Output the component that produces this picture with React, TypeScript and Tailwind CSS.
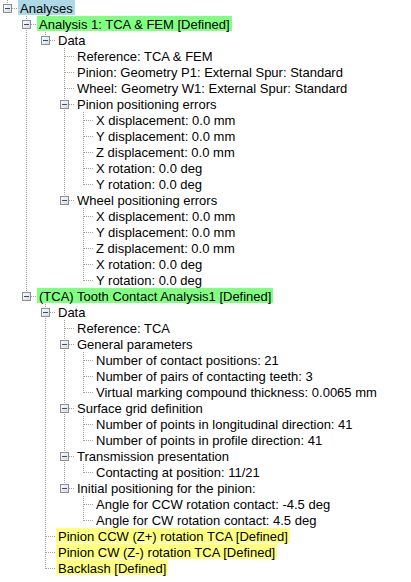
import React from "react";

type TreeNode = {
  label: string;
  hl?: "blue" | "green" | "yellow";
  children?: TreeNode[];
};

const positioning = (prefix: string): TreeNode => ({
  label: prefix,
  children: [
    { label: "X displacement: 0.0 mm" },
    { label: "Y displacement: 0.0 mm" },
    { label: "Z displacement: 0.0 mm" },
    { label: "X rotation: 0.0 deg" },
    { label: "Y rotation: 0.0 deg" },
  ],
});

const tree: TreeNode[] = [
  {
    label: "Analyses",
    hl: "blue",
    children: [
      {
        label: "Analysis 1: TCA & FEM [Defined]",
        hl: "green",
        children: [
          {
            label: "Data",
            children: [
              { label: "Reference: TCA & FEM" },
              { label: "Pinion: Geometry P1: External Spur: Standard" },
              { label: "Wheel: Geometry W1: External Spur: Standard" },
              positioning("Pinion positioning errors"),
              positioning("Wheel positioning errors"),
            ],
          },
        ],
      },
      {
        label: "(TCA) Tooth Contact Analysis1 [Defined]",
        hl: "green",
        children: [
          {
            label: "Data",
            children: [
              { label: "Reference: TCA" },
              {
                label: "General parameters",
                children: [
                  { label: "Number of contact positions: 21" },
                  { label: "Number of pairs of contacting teeth: 3" },
                  { label: "Virtual marking compound thickness: 0.0065 mm" },
                ],
              },
              {
                label: "Surface grid definition",
                children: [
                  { label: "Number of points in longitudinal direction: 41" },
                  { label: "Number of points in profile direction: 41" },
                ],
              },
              {
                label: "Transmission presentation",
                children: [{ label: "Contacting at position: 11/21" }],
              },
              {
                label: "Initial positioning for the pinion:",
                children: [
                  { label: "Angle for CCW rotation contact: -4.5 deg" },
                  { label: "Angle for CW rotation contact: 4.5 deg" },
                ],
              },
            ],
          },
          { label: "Pinion CCW (Z+) rotation TCA [Defined]", hl: "yellow" },
          { label: "Pinion CW (Z-) rotation TCA [Defined]", hl: "yellow" },
          { label: "Backlash [Defined]", hl: "yellow" },
        ],
      },
    ],
  },
];

type Row = {
  node: TreeNode;
  guides: boolean[];
  last: boolean;
};

function flatten(nodes: TreeNode[], guides: boolean[], out: Row[]) {
  nodes.forEach((node, i) => {
    const last = i === nodes.length - 1;
    out.push({ node, guides, last });
    if (node.children) flatten(node.children, [...guides, !last], out);
  });
  return out;
}

const LINE = "#a0a0a0";

function Guide({ on }: { on: boolean }) {
  return (
    <svg width="19" height="16" className="shrink-0 block">
      {on && (
        <line x1="7.5" y1="0" x2="7.5" y2="16" stroke={LINE} strokeDasharray="1 1" />
      )}
    </svg>
  );
}

function Connector({ last, expander }: { last: boolean; expander: boolean }) {
  return (
    <svg width="18" height="16" className="shrink-0 block">
      <line x1="7.5" y1="0" x2="7.5" y2={last ? 9 : 16} stroke={LINE} strokeDasharray="1 1" />
      <line x1="8" y1="8.5" x2="18" y2="8.5" stroke={LINE} strokeDasharray="1 1" />
      {expander && (
        <g>
          <defs>
            <linearGradient id="exp" x1="0" y1="0" x2="1" y2="1">
              <stop offset="0" stopColor="#ffffff" />
              <stop offset="1" stopColor="#d6d6d6" />
            </linearGradient>
          </defs>
          <rect x="3.5" y="4.5" width="8" height="8" fill="url(#exp)" stroke="#8e8f8f" />
          <rect x="5" y="8" width="5" height="1" fill="#2c4a9a" />
        </g>
      )}
    </svg>
  );
}

const hlClass: Record<string, string> = {
  blue: "bg-[#add8e6]",
  green: "bg-[#80ff80]",
  yellow: "bg-[#ffff80]",
};

export default function App() {
  const rows = flatten(tree, [], []);
  return (
    <div
      className="w-[411px] h-[582px] bg-white overflow-hidden text-[13px] text-black"
      style={{ fontFamily: '"Liberation Sans", Arial, sans-serif' }}
    >
      {rows.map((r, i) => (
        <div key={i} className="flex h-4 items-start">
          {r.guides.map((g, j) => (
            <Guide key={j} on={g} />
          ))}
          <Connector last={r.last} expander={!!r.node.children} />
          <span
            className={`h-[15px] leading-[17px] px-[2px] whitespace-nowrap ${
              r.node.hl ? hlClass[r.node.hl] : ""
            }`}
          >
            {r.node.label}
          </span>
        </div>
      ))}
    </div>
  );
}
